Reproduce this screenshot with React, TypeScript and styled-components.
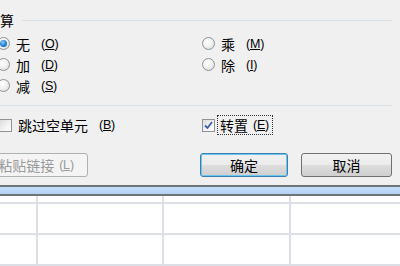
import React from "react";
import styled, { createGlobalStyle, css } from "styled-components";

const Global = createGlobalStyle`
  html, body { margin: 0; padding: 0; }
  body {
    width: 400px;
    height: 266px;
    overflow: hidden;
    background: #ffffff;
    font-family: "Noto Sans CJK SC", "Liberation Sans", sans-serif;
  }
`;

const Page = styled.div`
  width: 400px;
  height: 266px;
  overflow: hidden;
  display: flex;
  flex-direction: column;
`;

const Dialog = styled.div`
  height: 185px;
  flex: none;
  background: #f0f0f0;
  display: flex;
  flex-direction: column;
  padding-top: 10px;
  box-sizing: border-box;
  color: #000;
  font-size: 14px;
`;

const GroupHeader = styled.div`
  height: 20px;
  display: flex;
  align-items: center;
  gap: 8px;
  padding-right: 8px;
`;

const HeaderText = styled.span`
  line-height: 20px;
`;

const Line = styled.div`
  flex: 1;
  height: 0;
  border-top: 1px solid #d6e0e6;
`;

const OptionGrid = styled.div<{ $rowH: number; $top: number }>`
  display: grid;
  grid-template-columns: 205px 1fr;
  grid-auto-rows: ${(p) => p.$rowH}px;
  margin-left: -3px;
  margin-top: ${(p) => p.$top}px;
  align-items: center;
`;

const Option = styled.label<{ $shift?: number }>`
  display: flex;
  align-items: center;
  gap: 6px;
  margin-left: ${(p) => p.$shift ?? 0}px;
  line-height: 18px;
  white-space: nowrap;
`;

const Radio = styled.span<{ $on?: boolean }>`
  width: 13px;
  height: 13px;
  flex: none;
  box-sizing: border-box;
  border-radius: 50%;
  border: 1px solid #8f9396;
  background: radial-gradient(circle at 40% 35%, #ffffff 0%, #f1f1f1 45%, #d6d6d6 100%);
  position: relative;
  ${(p) =>
    p.$on &&
    css`
      &::after {
        content: "";
        position: absolute;
        left: 2px;
        top: 2px;
        width: 7px;
        height: 7px;
        border-radius: 50%;
        background: radial-gradient(circle at 40% 35%, #8fd0ff 0%, #2a8ad8 45%, #0c4f8f 100%);
      }
    `}
`;

const Check = styled.span`
  width: 13px;
  height: 13px;
  flex: none;
  box-sizing: border-box;
  border: 1px solid #8f9396;
  background: linear-gradient(135deg, #dcdcdc 0%, #f4f4f4 60%, #ffffff 100%);
  display: flex;
  align-items: center;
  justify-content: center;
`;

const Accel = styled.span`
  font-family: "Liberation Sans", sans-serif;
  font-size: 12.5px;
  margin-left: 5px;
  letter-spacing: -0.2px;
  color: inherit;
  u { text-decoration: underline; }
`;

const Focus = styled.span`
  display: inline-flex;
  align-items: center;
  height: 18px;
  padding: 0 3px 0 2px;
  margin-left: -3px;
  box-sizing: border-box;
  outline: 1px dotted #333;
`;

const Separator = styled.div`
  height: 0;
  margin-top: 9px;
  margin-right: 8px;
  border-top: 1px solid #d6e0e6;
`;

const ButtonRow = styled.div`
  display: flex;
  height: 24px;
  margin-top: 19px;
`;

const Button = styled.button<{ $w: number; $variant?: "default" | "disabled" }>`
  width: ${(p) => p.$w}px;
  height: 24px;
  flex: none;
  box-sizing: border-box;
  border-radius: 3px;
  border: 1px solid #707070;
  background: linear-gradient(#f2f2f2 0%, #ebebeb 48%, #dddddd 52%, #cfcfcf 100%);
  font-family: "Noto Sans CJK SC", sans-serif;
  font-size: 14px;
  color: #000;
  padding: 0;
  display: flex;
  align-items: center;
  justify-content: center;
  white-space: nowrap;
  ${(p) =>
    p.$variant === "default" &&
    css`
      border-color: #3c7fb1;
      box-shadow: inset 0 0 0 1px #6cc6ee;
    `}
  ${(p) =>
    p.$variant === "disabled" &&
    css`
      border-color: #adb2b5;
      background: #f4f4f4;
      color: #9a9a9a;
    `}
`;

const LinkButton = styled(Button)`
  margin-left: -16px;
`;

const Spacer = styled.div<{ $w: number }>`
  width: ${(p) => p.$w}px;
  flex: none;
`;

const Frame = styled.div`
  height: 11px;
  flex: none;
  box-sizing: border-box;
  border-top: 2px solid #6f7479;
  border-bottom: 2px solid #6f7479;
  background: linear-gradient(#c7defa, #b5d2f3);
`;

const Sheet = styled.div`
  flex: 1;
  display: grid;
  grid-template-columns: 36px 124px 125px 1fr;
  grid-template-rows: 6px 29px 29px 29px;
  gap: 2px;
  background: #dcdfe5;
`;

const Cell = styled.div`
  background: #ffffff;
`;

const Lbl = ({ t, k }: { t: string; k: string }) => (
  <>
    <span>{t}</span>
    <Accel>
      (<u>{k}</u>)
    </Accel>
  </>
);

const CheckMark = () => (
  <svg width="9" height="9" viewBox="0 0 9 9">
    <path d="M1 4.5 L3.5 7 L8 1" fill="none" stroke="#3a5fa8" strokeWidth="1.8" />
  </svg>
);

export default function App() {
  return (
    <>
      <Global />
      <Page>
        <Dialog>
          <GroupHeader>
            <HeaderText>算</HeaderText>
            <Line />
          </GroupHeader>
          <OptionGrid $rowH={21} $top={3}>
            <Option>
              <Radio $on />
              <Lbl t="无" k="O" />
            </Option>
            <Option>
              <Radio />
              <Lbl t="乘" k="M" />
            </Option>
            <Option>
              <Radio />
              <Lbl t="加" k="D" />
            </Option>
            <Option>
              <Radio />
              <Lbl t="除" k="I" />
            </Option>
            <Option>
              <Radio />
              <Lbl t="减" k="S" />
            </Option>
          </OptionGrid>
          <Separator />
          <OptionGrid $rowH={18} $top={10}>
            <Option $shift={2}>
              <Check />
              <Lbl t="跳过空单元" k="B" />
            </Option>
            <Option>
              <Check>
                <CheckMark />
              </Check>
              <Focus>
                <Lbl t="转置" k="E" />
              </Focus>
            </Option>
          </OptionGrid>
          <ButtonRow>
            <LinkButton $w={104} $variant="disabled">
              粘贴链接
              <Accel>
                (<u>L</u>)
              </Accel>
            </LinkButton>
            <Spacer $w={112} />
            <Button $w={88} $variant="default">
              确定
            </Button>
            <Spacer $w={13} />
            <Button $w={91}>取消</Button>
          </ButtonRow>
        </Dialog>
        <Frame />
        <Sheet>
          {Array.from({ length: 16 }).map((_, i) => (
            <Cell key={i} />
          ))}
        </Sheet>
      </Page>
    </>
  );
}
